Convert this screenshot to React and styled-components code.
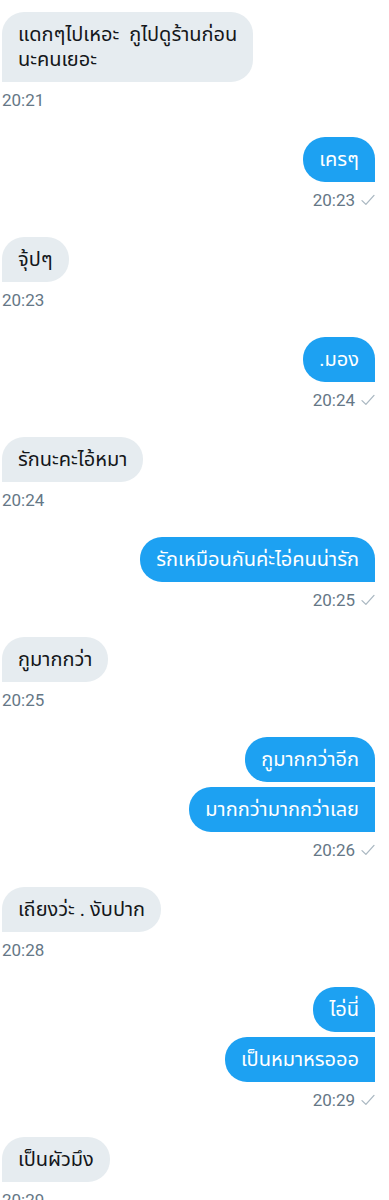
import React from 'react';
import styled, { createGlobalStyle } from 'styled-components';

const GlobalStyle = createGlobalStyle`
  body {
    margin: 0;
    background: #ffffff;
    font-family: Roboto, 'Noto Sans Thai', 'Noto Sans', sans-serif;
  }
`;

const messages = [
  { mine: false, texts: ['แดกๆไปเหอะ  กูไปดูร้านก่อน\nนะคนเยอะ'], time: '20:21' },
  { mine: true, texts: ['เครๆ'], time: '20:23' },
  { mine: false, texts: ['จุ้ปๆ'], time: '20:23' },
  { mine: true, texts: ['.มอง'], time: '20:24' },
  { mine: false, texts: ['รักนะคะไอ้หมา'], time: '20:24' },
  { mine: true, texts: ['รักเหมือนกันค่ะไอ่คนน่ารัก'], time: '20:25' },
  { mine: false, texts: ['กูมากกว่า'], time: '20:25' },
  { mine: true, texts: ['กูมากกว่าอีก', 'มากกว่ามากกว่าเลย'], time: '20:26' },
  { mine: false, texts: ['เถียงว่ะ . งับปาก'], time: '20:28' },
  { mine: true, texts: ['ไอ่นี่', 'เป็นหมาหรอออ'], time: '20:29' },
  { mine: false, texts: ['เป็นผัวมึง'], time: '20:29' },
];

const Check = () => (
  <svg width="14" height="12" viewBox="0 0 14 12" fill="none">
    <path d="M1 6.6 L4.9 10.4 L13 1.4" stroke="#aab8c2" strokeWidth="1.3" strokeLinecap="round" strokeLinejoin="round" />
  </svg>
);

const App = () => {
  return (
    <>
      <GlobalStyle />
      <Thread>
        {messages.map((m, i) => (
          <Group key={i} mine={m.mine}>
            {m.texts.map((t, j) => (
              <Bubble key={j} mine={m.mine} first={j === 0}>
                {t}
              </Bubble>
            ))}
            <Meta>
              <span>{m.time}</span>
              {m.mine && <Check />}
            </Meta>
          </Group>
        ))}
      </Thread>
    </>
  );
};

const Thread = styled.div`
  display: flex;
  flex-direction: column;
  padding: 12px 14px 0 2px;
`;

const Group = styled.div.withConfig({ shouldForwardProp: (p) => p !== 'mine' })`
  display: flex;
  flex-direction: column;
  align-items: ${(p) => (p.mine ? 'flex-end' : 'flex-start')};
  gap: 5px;
  margin-bottom: 27px;
`;

const Bubble = styled.div.withConfig({
  shouldForwardProp: (p) => !['mine', 'first'].includes(p),
})`
  max-width: 300px;
  padding: 10px 16px;
  font-size: 20px;
  line-height: 25px;
  white-space: pre-wrap;
  background: ${(p) => (p.mine ? '#1da1f2' : '#e6ecf0')};
  color: ${(p) => (p.mine ? '#ffffff' : '#14171a')};
  border-radius: 22px;
  ${(p) =>
    p.mine
      ? `
    border-bottom-right-radius: 0;
    ${p.first ? '' : 'border-top-right-radius: 0;'}
  `
      : `
    border-bottom-left-radius: 0;
    ${p.first ? '' : 'border-top-left-radius: 0;'}
  `}
`;

const Meta = styled.div`
  display: flex;
  align-items: center;
  gap: 6px;
  margin-top: 3px;
  font-size: 17px;
  line-height: 20px;
  color: #657786;
`;

export default App;
